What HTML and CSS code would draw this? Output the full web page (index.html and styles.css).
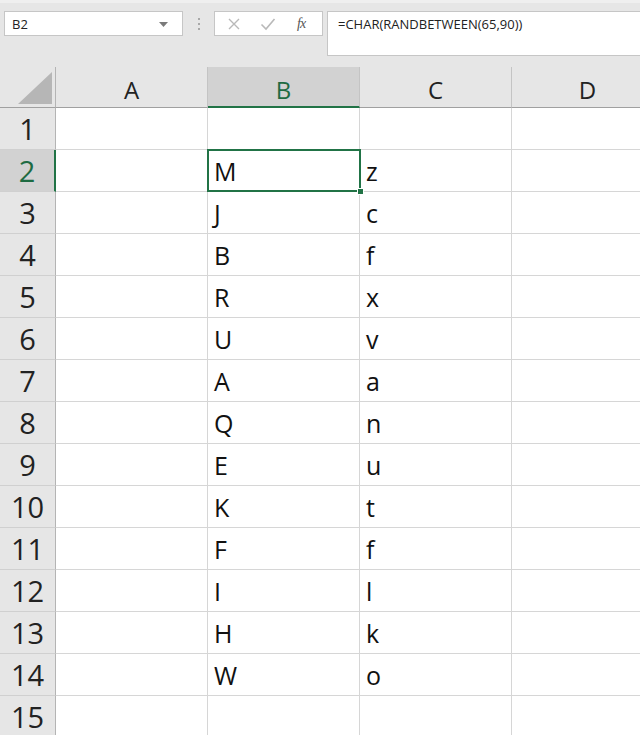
FILE: index.html
```html
<!DOCTYPE html>
<html>
<head>
<meta charset="utf-8">
<link rel="stylesheet" href="styles.css">
</head>
<body>
<div class="toolbar">
  <div class="namebox">
    <span class="namebox-text">B2</span>
    <svg class="namebox-arrow" width="9" height="5" viewBox="0 0 9 5"><path d="M0 0 L9 0 L4.5 5 Z" fill="#7a7a7a"/></svg>
  </div>
  <div class="dots"><span></span><span></span><span></span></div>
  <div class="buttons">
    <svg class="btn-icon" width="14" height="14" viewBox="0 0 14 14"><path d="M2 2 L12 12 M12 2 L2 12" stroke="#b9b9b9" stroke-width="1.4" fill="none"/></svg>
    <svg class="btn-icon" width="16" height="14" viewBox="0 0 16 14"><path d="M1.5 7.5 L6 12 L14.5 2" stroke="#b9b9b9" stroke-width="1.6" fill="none"/></svg>
    <span class="fx">fx</span>
  </div>
  <div class="formula">=CHAR(RANDBETWEEN(65,90))</div>
</div>

<div class="sheet">
  <div class="corner">
    <svg width="56" height="41" viewBox="0 0 56 41"><path d="M18 37 L52 5 L52 37 Z" fill="#b6b6b6"/></svg>
  </div>
  <div class="colhead">A</div>
  <div class="colhead sel">B</div>
  <div class="colhead">C</div>
  <div class="colhead">D</div>

  <div class="rowhead">1</div><div class="cell"></div><div class="cell"></div><div class="cell"></div><div class="cell"></div>
  <div class="rowhead sel">2</div><div class="cell"></div><div class="cell active">M<div class="selbox"><div class="handle"></div></div></div><div class="cell">z</div><div class="cell"></div>
  <div class="rowhead">3</div><div class="cell"></div><div class="cell">J</div><div class="cell">c</div><div class="cell"></div>
  <div class="rowhead">4</div><div class="cell"></div><div class="cell">B</div><div class="cell">f</div><div class="cell"></div>
  <div class="rowhead">5</div><div class="cell"></div><div class="cell">R</div><div class="cell">x</div><div class="cell"></div>
  <div class="rowhead">6</div><div class="cell"></div><div class="cell">U</div><div class="cell">v</div><div class="cell"></div>
  <div class="rowhead">7</div><div class="cell"></div><div class="cell">A</div><div class="cell">a</div><div class="cell"></div>
  <div class="rowhead">8</div><div class="cell"></div><div class="cell">Q</div><div class="cell">n</div><div class="cell"></div>
  <div class="rowhead">9</div><div class="cell"></div><div class="cell">E</div><div class="cell">u</div><div class="cell"></div>
  <div class="rowhead">10</div><div class="cell"></div><div class="cell">K</div><div class="cell">t</div><div class="cell"></div>
  <div class="rowhead">11</div><div class="cell"></div><div class="cell">F</div><div class="cell">f</div><div class="cell"></div>
  <div class="rowhead">12</div><div class="cell"></div><div class="cell">I</div><div class="cell">l</div><div class="cell"></div>
  <div class="rowhead">13</div><div class="cell"></div><div class="cell">H</div><div class="cell">k</div><div class="cell"></div>
  <div class="rowhead">14</div><div class="cell"></div><div class="cell">W</div><div class="cell">o</div><div class="cell"></div>
  <div class="rowhead">15</div><div class="cell"></div><div class="cell"></div><div class="cell"></div><div class="cell"></div>
</div>
</body>
</html>
```

FILE: styles.css
```css
* { box-sizing: border-box; }
html, body {
  margin: 0;
  padding: 0;
  background: #ffffff;
  overflow: hidden;
}
body {
  width: 640px;
  height: 735px;
  font-family: "Open Sans", "Noto Sans", sans-serif;
}

/* ---------- formula bar ---------- */
.toolbar {
  height: 67px;
  background: #e6e6e6;
  border-top: 3px solid #efefef;
  display: flex;
  align-items: flex-start;
  padding-top: 8px;
  padding-left: 4px;
}
.namebox {
  width: 179px;
  height: 25px;
  background: #fff;
  border: 1px solid #c6c6c6;
  display: flex;
  align-items: center;
  justify-content: space-between;
  padding: 0 14px 0 7px;
}
.namebox-text {
  font-size: 13px;
  color: #222;
}
.namebox-arrow { margin-top: 1px; }
.dots {
  width: 31px;
  height: 25px;
  display: flex;
  flex-direction: column;
  align-items: center;
  justify-content: center;
  gap: 3px;
}
.dots span {
  width: 2px;
  height: 2px;
  background: #a8a8a8;
}
.buttons {
  width: 109px;
  height: 25px;
  background: #fff;
  border: 1px solid #c6c6c6;
  display: flex;
  align-items: center;
  padding-left: 12px;
  gap: 19px;
}
.fx {
  font-family: "Liberation Serif", serif;
  font-style: italic;
  font-size: 14px;
  color: #555;
  letter-spacing: -1px;
  margin-left: 2px;
}
.formula {
  flex: 1;
  margin-left: 4px;
  height: 45px;
  background: #fff;
  border: 1px solid #c6c6c6;
  border-right: none;
  font-size: 13px;
  color: #222;
  padding: 3px 0 0 10px;
}

/* ---------- sheet grid ---------- */
.sheet {
  width: 664px;
  display: grid;
  grid-template-columns: 56px 152px 152px 152px 152px;
  grid-template-rows: 41px;
  grid-auto-rows: 42px;
}
.corner {
  background: #e6e6e6;
  border-right: 1px solid #b4b4b4;
  border-bottom: 1px solid #a0a0a0;
}
.corner svg { display: block; }
.colhead {
  background: #e6e6e6;
  border-right: 1px solid #c4c4c4;
  border-bottom: 1px solid #a0a0a0;
  display: flex;
  justify-content: center;
  align-items: center;
  padding-top: 6px;
  font-size: 24px;
  line-height: 24px;
  color: #222;
}
.colhead.sel {
  background: #d2d2d2;
  color: #1e6b42;
  border-bottom: 2px solid #217346;
}
.rowhead {
  background: #e6e6e6;
  border-right: 1px solid #b4b4b4;
  border-bottom: 1px solid #d0d0d0;
  display: flex;
  justify-content: center;
  align-items: center;
  font-size: 29px;
  line-height: 29px;
  color: #222;
}
.rowhead.sel {
  background: #d2d2d2;
  color: #1e6b42;
  border-right: 2px solid #217346;
}
.cell {
  border-right: 1px solid #d6d6d6;
  border-bottom: 1px solid #d6d6d6;
  display: flex;
  align-items: flex-end;
  padding: 0 0 3px 6px;
  font-size: 25px;
  line-height: 34px;
  color: #111;
}
.cell.active {
  position: relative;
}
.selbox {
  position: absolute;
  top: -1px;
  left: -1px;
  right: -2px;
  bottom: -1px;
  border: 2px solid #217346;
  z-index: 2;
}
.handle {
  position: absolute;
  right: -5px;
  bottom: -5px;
  width: 7px;
  height: 7px;
  background: #217346;
  border: 1px solid #fff;
}
```
